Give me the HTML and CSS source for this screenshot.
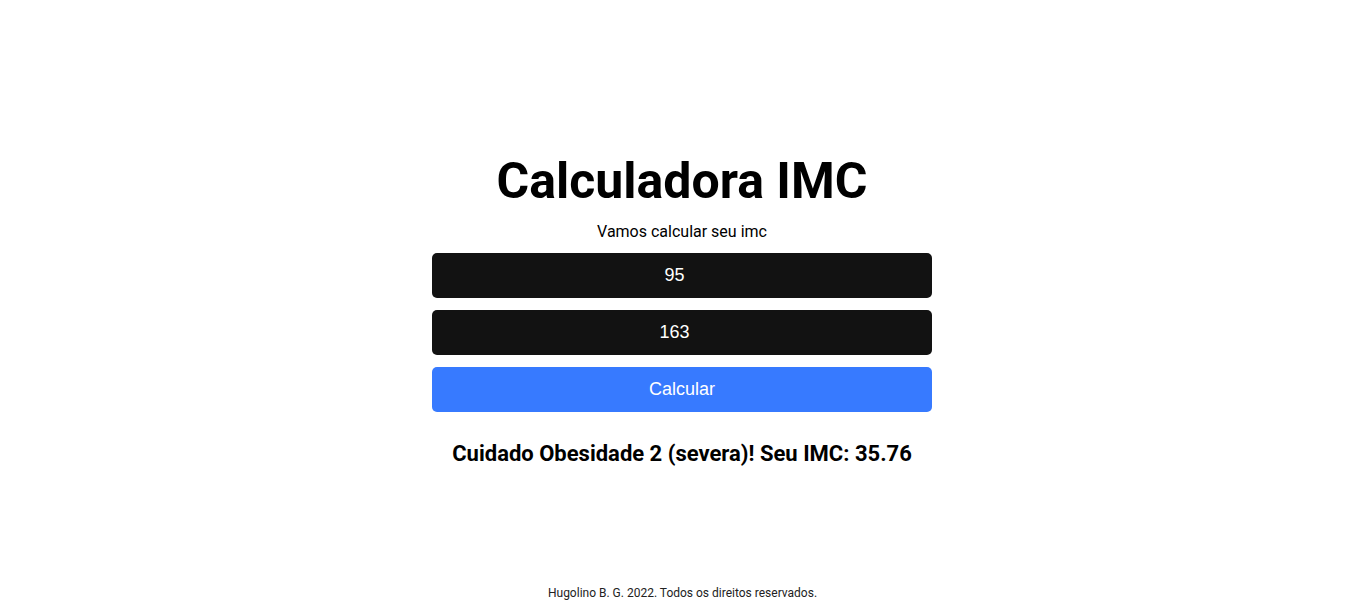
FILE: index.html
```html
<!DOCTYPE html>
<html lang="pt-BR">
<head>
<meta charset="utf-8">
<title>Calculadora IMC</title>
<link rel="stylesheet" href="styles.css">
</head>
<body>
<div class="page">
  <main class="main">
    <h1 class="title">Calculadora IMC</h1>
    <p class="subtitle">Vamos calcular seu imc</p>
    <div class="form">
      <input class="field" type="number" value="95">
      <input class="field" type="number" value="163">
      <button class="btn">Calcular</button>
    </div>
    <h2 class="result">Cuidado Obesidade 2 (severa)! Seu IMC: 35.76</h2>
  </main>
  <footer class="footer">Hugolino B. G. 2022. Todos os direitos reservados.</footer>
</div>
</body>
</html>
```

FILE: styles.css
```css
* { box-sizing: border-box; }
html, body { margin: 0; padding: 0; height: 100%; }
body { font-family: Roboto, "Noto Sans", sans-serif; color: #000; background: #fff; }
.page { min-height: 100%; display: flex; flex-direction: column; }
.main { flex: 1; display: flex; flex-direction: column; align-items: center; justify-content: center; padding: 32px 1px 0 0; }
.title { margin: 0; font-size: 50px; font-weight: 700; line-height: 60px; }
.subtitle { margin: 12px 0 12px; font-size: 16px; line-height: 18px; }
.form { width: 500px; display: flex; flex-direction: column; gap: 12px; }
.field { height: 45px; border: none; border-radius: 5px; background: #121212; color: #fff; text-align: center; font-family: "Liberation Sans", Arial, sans-serif; font-size: 18px; outline: none; }
.btn { height: 45px; border: none; border-radius: 5px; background: #377aff; color: #fff; font-family: "Liberation Sans", Arial, sans-serif; font-size: 18px; }
.result { margin: 28px 0 0; font-size: 22px; font-weight: 700; line-height: 28px; }
.footer { text-align: center; font-size: 12px; color: #222; padding: 0 0 16px; line-height: 14px; }
```
